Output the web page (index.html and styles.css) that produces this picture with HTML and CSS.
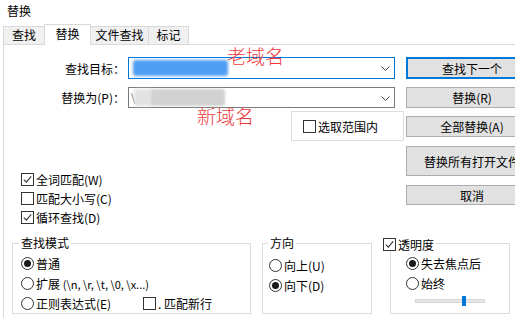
FILE: index.html
```html
<!DOCTYPE html>
<html lang="zh">
<head>
<meta charset="utf-8">
<title>替换</title>
<link rel="stylesheet" href="styles.css">
</head>
<body>
<div class="window">
  <div class="title">替换</div>
  <div class="tabs">
    <div class="tab t1">查找</div>
    <div class="tab t2 active">替换</div>
    <div class="tab t3">文件查找</div>
    <div class="tab t4">标记</div>
  </div>
  <div class="panel">
    <div class="top">
      <div class="form">
        <div class="field">
          <span class="lbl">查找目标：</span>
          <div class="combo focus">
            <span class="blur blue"></span>
            <svg class="chev" width="9" height="5" viewBox="0 0 9 5"><path d="M0.5 0.5 L4.5 4.5 L8.5 0.5" fill="none" stroke="#444" stroke-width="1"/></svg>
          </div>
        </div>
        <div class="field f2">
          <span class="lbl">替换为(P)：</span>
          <div class="combo">
            <span class="slash">\</span>
            <span class="blur grey-l"></span>
            <span class="blur grey"></span>
            <svg class="chev" width="9" height="5" viewBox="0 0 9 5"><path d="M0.5 0.5 L4.5 4.5 L8.5 0.5" fill="none" stroke="#444" stroke-width="1"/></svg>
          </div>
        </div>
        <div class="range"><span class="cb"></span><span class="rtext">选取范围内</span></div>
        <div class="opts">
          <div class="opt"><span class="cb"><svg width="11" height="11" viewBox="0 0 11 11"><path d="M1.8 5.6 L4.3 8.1 L9.2 2.4" fill="none" stroke="#333" stroke-width="1.1"/></svg></span><span>全词匹配(W)</span></div>
          <div class="opt"><span class="cb"></span><span>匹配大小写(C)</span></div>
          <div class="opt"><span class="cb"><svg width="11" height="11" viewBox="0 0 11 11"><path d="M1.8 5.6 L4.3 8.1 L9.2 2.4" fill="none" stroke="#333" stroke-width="1.1"/></svg></span><span>循环查找(D)</span></div>
        </div>
      </div>
      <div class="buttons">
        <div class="btn b1">查找下一个</div>
        <div class="btn b2">替换(R)</div>
        <div class="btn b3">全部替换(A)</div>
        <div class="btn b4">替换所有打开文件</div>
        <div class="btn b5">取消</div>
      </div>
    </div>
    <div class="groups">
      <fieldset class="grp g1">
        <legend>查找模式</legend>
        <div class="gc">
          <div class="rad"><span class="rd on"></span><span>普通</span></div>
          <div class="rad"><span class="rd"></span><span>扩展 <span class="lat">(\n, \r, \t, \0, \x...)</span></span></div>
          <div class="rad"><span class="rd"></span><span class="w-re">正则表达式(E)</span><span class="cb"></span><span>. 匹配新行</span></div>
        </div>
      </fieldset>
      <fieldset class="grp g2">
        <legend>方向</legend>
        <div class="gc">
          <div class="rad"><span class="rd"></span><span>向上(U)</span></div>
          <div class="rad"><span class="rd on"></span><span>向下(D)</span></div>
        </div>
      </fieldset>
      <fieldset class="grp g3">
        <legend><span class="cb"><svg width="11" height="11" viewBox="0 0 11 11"><path d="M1.8 5.6 L4.3 8.1 L9.2 2.4" fill="none" stroke="#333" stroke-width="1.1"/></svg></span><span class="ltxt">透明度</span></legend>
        <div class="gc">
          <div class="rad"><span class="rd on"></span><span>失去焦点后</span></div>
          <div class="rad"><span class="rd"></span><span>始终</span></div>
          <div class="slider"><span class="thumb"></span></div>
        </div>
      </fieldset>
    </div>
    <div class="note n1">老域名</div>
    <div class="note n2">新域名</div>
  </div>
</div>
</body>
</html>
```
FILE: styles.css
```css
html, body {
  margin: 0;
  padding: 0;
}
body {
  width: 515px;
  height: 318px;
  overflow: hidden;
  background: #fff;
  color: #000;
  font-family: "Noto Sans CJK SC", "Microsoft YaHei", sans-serif;
  font-size: 12px;
}
.window {
  width: 515px;
  height: 318px;
  position: relative;
}
.title {
  height: 24px;
  line-height: 22px;
  padding-left: 7px;
  font-size: 12px;
}
.tabs {
  display: flex;
  align-items: flex-end;
  height: 20px;
  padding-left: 3px;
}
.tab {
  box-sizing: border-box;
  height: 18px;
  line-height: 16px;
  border: 1px solid #d9d9d9;
  border-bottom: none;
  background: #f0f0f0;
  text-align: center;
  margin-left: -1px;
}
.t1 { width: 42px; margin-left: 0; }
.t2 { width: 47px; }
.t3 { width: 59px; }
.t4 { width: 41px; }
.tab.active {
  height: 21px;
  line-height: 17px;
  background: #fff;
  margin-bottom: -1px;
  position: relative;
  z-index: 1;
}
.panel {
  position: relative;
  box-sizing: border-box;
  height: 274px;
  margin-left: 3px;
  border-top: 1px solid #d9d9d9;
  border-left: 1px solid #d9d9d9;
  padding-top: 12px;
}
.top {
  display: flex;
}
.form {
  width: 402px;
  flex: none;
}
.field {
  display: flex;
  align-items: center;
  height: 22px;
}
.f2 {
  margin-top: 8px;
  height: 21px;
}
.lbl {
  width: 121px;
  text-align: right;
  margin-right: 3px;
  white-space: nowrap;
}
.combo {
  position: relative;
  box-sizing: border-box;
  width: 267px;
  height: 100%;
  border: 1px solid #7a7a7a;
  background: #fff;
}
.combo.focus {
  border-color: #0078d7;
}
.chev {
  position: absolute;
  right: 4px;
  top: 8px;
}
.blur {
  position: absolute;
  border-radius: 3px;
}
.blur.blue {
  left: 4px;
  top: 2px;
  width: 95px;
  height: 16px;
  background: #4f9cf5;
  filter: blur(1.5px);
}
.blur.grey-l {
  left: 5px;
  top: 1px;
  width: 20px;
  height: 17px;
  background: #e2e2e2;
  filter: blur(1.5px);
}
.blur.grey {
  left: 22px;
  top: 1px;
  width: 74px;
  height: 17px;
  background: #d2d2d2;
  filter: blur(1.2px);
}
.slash {
  position: absolute;
  left: 2px;
  top: 1px;
  line-height: 16px;
  color: #555;
  font-size: 11px;
}
.range {
  box-sizing: border-box;
  margin: 3px 0 0 287px;
  width: 113px;
  height: 30px;
  border: 1px solid #dcdcdc;
  display: flex;
  align-items: center;
  padding-left: 11px;
}
.rtext {
  margin-left: 2px;
}
.cb {
  box-sizing: border-box;
  display: inline-flex;
  align-items: center;
  justify-content: center;
  width: 13px;
  height: 13px;
  border: 1px solid #333;
  background: #fff;
  flex: none;
  vertical-align: middle;
}
.opts {
  margin-top: 28.5px;
  padding-left: 17px;
}
.opt {
  display: flex;
  align-items: center;
  height: 19px;
  gap: 2px;
}
.buttons {
  display: flex;
  flex-direction: column;
  width: 132px;
  flex: none;
}
.btn {
  box-sizing: border-box;
  height: 21px;
  background: #e1e1e1;
  border: 1px solid #adadad;
  display: flex;
  align-items: center;
  justify-content: center;
  white-space: nowrap;
}
.b1 {
  height: 22px;
  border-color: #0078d7;
  box-shadow: inset 0 0 0 1px #0078d7;
}
.b2 { margin-top: 8px; }
.b3 { margin-top: 8px; }
.b4 { margin-top: 9px; height: 30px; }
.b5 { margin-top: 9px; height: 20px; }
.groups {
  display: flex;
  margin-top: 9.5px;
  padding-left: 8px;
}
.grp {
  box-sizing: border-box;
  margin: 0;
  padding: 0;
  min-width: 0;
  height: 78px;
  border: 1px solid #dcdcdc;
  flex: none;
}
.grp legend {
  padding: 0 2px;
  height: 14px;
  line-height: 14px;
  margin-left: 6px;
}
.g1 { width: 239px; }
.g2 { width: 110px; margin-left: 11px; }
.g3 { width: 120px; margin-left: 18px; }
.g2 legend { margin-left: 5px; }
.g3 legend {
  margin-left: -8px;
  padding: 0 2px 0 0;
}
.ltxt {
  margin-left: 2px;
  vertical-align: middle;
}
.g1 .gc { padding: 3px 0 0 8px; }
.g2 .gc { padding: 5px 0 0 6px; }
.g3 .gc { padding: 3px 0 0 15px; }
.rad {
  display: flex;
  align-items: center;
  height: 20px;
  gap: 2px;
  white-space: nowrap;
}
.rd {
  box-sizing: border-box;
  width: 13px;
  height: 13px;
  border: 1px solid #333;
  border-radius: 50%;
  background: #fff;
  display: flex;
  align-items: center;
  justify-content: center;
  flex: none;
}
.rd.on::after {
  content: "";
  width: 7px;
  height: 7px;
  border-radius: 50%;
  background: #1a1a1a;
}
.lat {
  font-size: 11px;
}
.w-re {
  width: 105px;
}
.slider {
  position: relative;
  margin: 6px 0 0 9px;
  width: 70px;
  height: 4px;
  box-sizing: border-box;
  background: #e7e7e7;
  border: 1px solid #d6d6d6;
}
.thumb {
  position: absolute;
  left: 46px;
  top: -4px;
  width: 4px;
  height: 10px;
  background: #0078d7;
}
.note {
  position: absolute;
  color: #ee3b3b;
  font-size: 19px;
  line-height: 20px;
  font-weight: 300;
  white-space: nowrap;
}
.n1 { left: 223px; top: 1px; }
.n2 { left: 193px; top: 61px; }
```
